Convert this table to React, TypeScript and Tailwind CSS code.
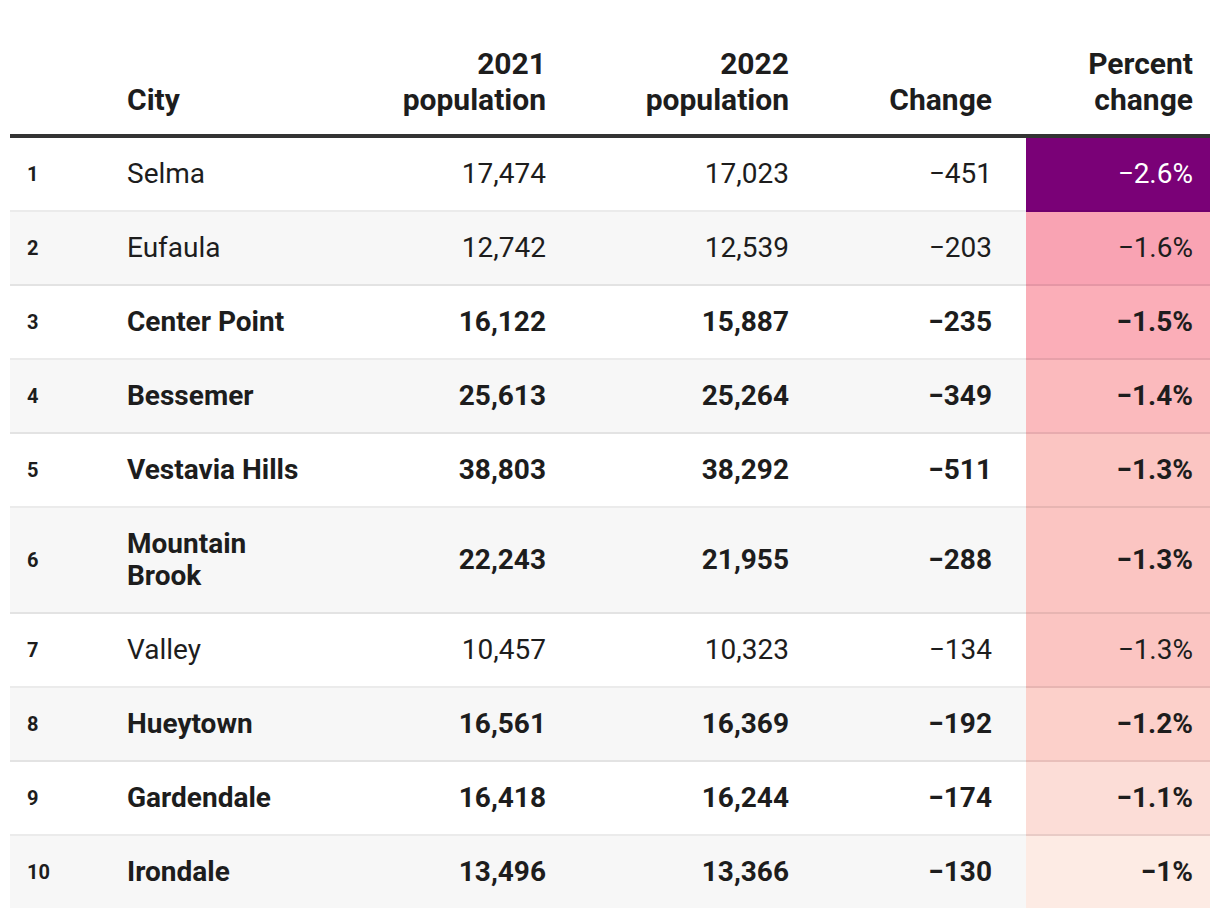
import React from "react";

interface Row {
  rank: number;
  city: string;
  pop2021: string;
  pop2022: string;
  change: string;
  pct: string;
  bold: boolean;
  color: string;
}

const rows: Row[] = [
  { rank: 1, city: "Selma", pop2021: "17,474", pop2022: "17,023", change: "−451", pct: "−2.6%", bold: false, color: "bg-[#7a0177] text-white" },
  { rank: 2, city: "Eufaula", pop2021: "12,742", pop2022: "12,539", change: "−203", pct: "−1.6%", bold: false, color: "bg-[#f9a3b3]" },
  { rank: 3, city: "Center Point", pop2021: "16,122", pop2022: "15,887", change: "−235", pct: "−1.5%", bold: true, color: "bg-[#fbaeb8]" },
  { rank: 4, city: "Bessemer", pop2021: "25,613", pop2022: "25,264", change: "−349", pct: "−1.4%", bold: true, color: "bg-[#fbbabd]" },
  { rank: 5, city: "Vestavia Hills", pop2021: "38,803", pop2022: "38,292", change: "−511", pct: "−1.3%", bold: true, color: "bg-[#fbc5c2]" },
  { rank: 6, city: "Mountain Brook", pop2021: "22,243", pop2022: "21,955", change: "−288", pct: "−1.3%", bold: true, color: "bg-[#fbc5c2]" },
  { rank: 7, city: "Valley", pop2021: "10,457", pop2022: "10,323", change: "−134", pct: "−1.3%", bold: false, color: "bg-[#fbc5c2]" },
  { rank: 8, city: "Hueytown", pop2021: "16,561", pop2022: "16,369", change: "−192", pct: "−1.2%", bold: true, color: "bg-[#fcd0ca]" },
  { rank: 9, city: "Gardendale", pop2021: "16,418", pop2022: "16,244", change: "−174", pct: "−1.1%", bold: true, color: "bg-[#fcddd7]" },
  { rank: 10, city: "Irondale", pop2021: "13,496", pop2022: "13,366", change: "−130", pct: "−1%", bold: true, color: "bg-[#fdebe4]" },
];

const cols = "grid grid-cols-[100px_218px_235px_243px_220px_184px]";

const App: React.FC = () => {
  return (
    <div
      className="min-h-screen bg-white px-[10px] pt-[46px] text-[#1d1d1d]"
      style={{ fontFamily: "Roboto, 'Liberation Sans', sans-serif" }}
    >
      {/* header */}
      <div className={`${cols} border-b-4 border-[#333] text-[30px] font-bold leading-[36px] text-[#1d1d1d]`}>
        <div />
        <div className="flex items-end px-[17px] pb-[16px]">City</div>
        <div className="flex items-end justify-end pr-[17px] pb-[16px] text-right">
          2021
          <br />
          population
        </div>
        <div className="flex items-end justify-end pr-[17px] pb-[16px] text-right">
          2022
          <br />
          population
        </div>
        <div className="flex items-end justify-end pr-[34px] pb-[16px] text-right">Change</div>
        <div className="flex items-end justify-end pr-[17px] pb-[16px] text-right">
          Percent
          <br />
          change
        </div>
      </div>

      {/* body */}
      {rows.map((r, i) => (
        <div
          key={r.rank}
          className={`${cols} text-[28px] leading-[32px] ${
            i % 2 === 1 ? "bg-[#f7f7f7]" : "bg-white"
          } ${r.bold ? "font-bold" : "font-normal"}`}
        >
          <Cell last={i === rows.length - 1} className="pl-[17px] text-[20px] font-bold">
            {r.rank}
          </Cell>
          <Cell last={i === rows.length - 1} className="px-[17px]">
            {r.city}
          </Cell>
          <Cell last={i === rows.length - 1} className="justify-end pr-[17px] text-right">
            {r.pop2021}
          </Cell>
          <Cell last={i === rows.length - 1} className="justify-end pr-[17px] text-right">
            {r.pop2022}
          </Cell>
          <Cell last={i === rows.length - 1} className="justify-end pr-[34px] text-right">
            {r.change}
          </Cell>
          <Cell last={i === rows.length - 1} className={`justify-end pr-[17px] text-right ${r.color}`}>
            {r.pct}
          </Cell>
        </div>
      ))}
    </div>
  );
};

const Cell: React.FC<{ className?: string; last?: boolean; children: React.ReactNode }> = ({
  className,
  last,
  children,
}) => (
  <div
    className={`flex items-center py-[20px] ${
      last ? "" : "border-b-2 border-black/[0.08]"
    } ${className ?? ""}`}
  >
    <span>{children}</span>
  </div>
);

export default App;
